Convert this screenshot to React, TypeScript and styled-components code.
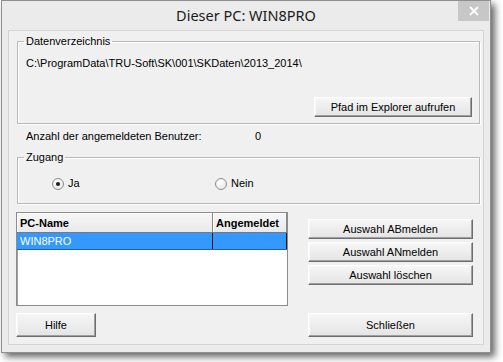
import React from "react";
import styled, { createGlobalStyle } from "styled-components";

const GlobalStyle = createGlobalStyle`
  html, body {
    margin: 0;
    padding: 0;
    background: #ffffff;
  }
  body {
    font-family: "Liberation Sans", Arial, sans-serif;
    font-size: 11px;
    color: #000;
  }
`;

const Page = styled.div`
  padding: 0 0 0 1px;
  width: 503px;
  height: 362px;
  box-sizing: border-box;
  overflow: hidden;
`;

const Window = styled.div`
  width: 490px;
  height: 353px;
  box-sizing: border-box;
  background: #ebebeb;
  border: 1px solid #8f8f8f;
  box-shadow: 4px 4px 7px rgba(0, 0, 0, 0.6);
  display: flex;
  flex-direction: column;
`;

const TitleBar = styled.div`
  height: 29px;
  display: grid;
  grid-template-columns: 33px 1fr 33px;
  align-items: start;
`;

const Title = styled.div`
  grid-column: 2;
  text-align: center;
  font-family: "Noto Sans", "Open Sans", sans-serif;
  font-size: 14.5px;
  line-height: 29px;
  color: #1a1a1a;
`;

const CloseButton = styled.div`
  grid-column: 3;
  justify-self: end;
  margin-right: 1px;
  width: 31px;
  height: 20px;
  background: #c7c7c7;
  display: flex;
  align-items: center;
  justify-content: center;
`;

const Client = styled.div`
  flex: 1;
  margin: 0 6px 7px 6px;
  background: #f0f0f0;
  border: 1px solid #d4d4d4;
  padding: 4px 3px 0 7px;
  display: flex;
  flex-direction: column;
`;

const GroupBox = styled.fieldset<{ $pb: number; $pt: number }>`
  margin: 0 0 0 1px;
  padding: ${(p) => p.$pt}px 7px ${(p) => p.$pb}px 8px;
  border: 1px solid #b9b9b9;
  box-shadow: inset 1px 1px 0 #ffffff, 1px 1px 0 #ffffff;
  min-width: 0;
`;

const Legend = styled.legend`
  padding: 0 2px;
  margin-left: -2px;
  line-height: 13px;
  font-size: 11px;
`;

const Line = styled.div`
  line-height: 13px;
  white-space: nowrap;
`;

const Button = styled.button<{ $w: number; $h: number }>`
  width: ${(p) => p.$w}px;
  height: ${(p) => p.$h}px;
  box-sizing: border-box;
  padding: 0;
  font-family: "Liberation Sans", Arial, sans-serif;
  font-size: 11px;
  color: #000;
  background: linear-gradient(#f6f6f6, #e4e4e4);
  border: 1px solid;
  border-color: #ffffff #6d6d6d #6d6d6d #ffffff;
  box-shadow: inset -1px -1px 0 #a0a0a0, inset 1px 1px 0 #f8f8f8;
`;

const ButtonRow = styled.div`
  display: flex;
  justify-content: flex-end;
  margin-top: 27px;
`;

const CountRow = styled.div`
  display: flex;
  line-height: 13px;
  margin: 6px 0 8px 0;
  padding-left: 10px;
`;

const CountLabel = styled.span`
  width: 229px;
`;

const RadioRow = styled.div`
  display: flex;
  padding-left: 26px;
`;

const RadioOption = styled.label`
  width: 163px;
  display: flex;
  align-items: center;
  gap: 4px;
  line-height: 13px;
`;

const RadioCircle = styled.span<{ $checked?: boolean }>`
  width: 12px;
  height: 12px;
  box-sizing: border-box;
  border-radius: 50%;
  border: 1px solid #8e8f8f;
  background: radial-gradient(circle at 40% 35%, #ffffff 0%, #e6e6e6 80%);
  display: flex;
  align-items: center;
  justify-content: center;
  &::after {
    content: "";
    width: 4px;
    height: 4px;
    border-radius: 50%;
    background: ${(p) => (p.$checked ? "#1a1a1a" : "transparent")};
  }
`;

const Lower = styled.div`
  display: flex;
  gap: 20px;
  margin-top: 8px;
`;

const ListView = styled.div`
  width: 272px;
  height: 94px;
  box-sizing: border-box;
  background: #ffffff;
  border: 1px solid #8c8c8c;
  box-shadow: inset 1px 1px 0 #a0a0a0;
`;

const ListRow = styled.div<{ $header?: boolean; $selected?: boolean }>`
  display: grid;
  grid-template-columns: 196px 1fr;
  height: ${(p) => (p.$header ? 19 : 16)}px;
  background: ${(p) =>
    p.$header ? "linear-gradient(#f7f7f7, #e9e9e9)" : p.$selected ? "#3399ff" : "transparent"};
  color: ${(p) => (p.$selected ? "#ffffff" : "#000")};
  font-weight: ${(p) => (p.$header ? "bold" : "normal")};
  border-bottom: 1px solid ${(p) => (p.$header ? "#7a7a7a" : p.$selected ? "#1a5fb0" : "transparent")};
`;

const Cell = styled.div<{ $header?: boolean }>`
  padding-left: 3px;
  display: flex;
  align-items: center;
  white-space: nowrap;
  overflow: hidden;
  border-right: 1px solid ${(p) => (p.$header ? "#8a8a8a" : "#1a1a1a")};
  box-shadow: ${(p) => (p.$header ? "inset 1px 1px 0 #ffffff" : "none")};
`;

const SideButtons = styled.div`
  display: flex;
  flex-direction: column;
  gap: 3px;
  padding-top: 7px;
`;

const BottomRow = styled.div`
  display: flex;
  justify-content: space-between;
  margin: 7px 0 0 0;
  width: 457px;
`;

export default function App() {
  return (
    <>
      <GlobalStyle />
      <Page>
        <Window>
          <TitleBar>
            <Title>Dieser PC: WIN8PRO</Title>
            <CloseButton>
              <svg width="10" height="10" viewBox="0 0 10 10">
                <path d="M1 1 L9 9 M9 1 L1 9" stroke="#ffffff" strokeWidth="1.8" />
              </svg>
            </CloseButton>
          </TitleBar>
          <Client>
            <GroupBox $pt={9} $pb={6}>
              <Legend>Datenverzeichnis</Legend>
              <Line>C:\ProgramData\TRU-Soft\SK\001\SKDaten\2013_2014\</Line>
              <ButtonRow>
                <Button $w={158} $h={20}>Pfad im Explorer aufrufen</Button>
              </ButtonRow>
            </GroupBox>
            <CountRow>
              <CountLabel>Anzahl der angemeldeten Benutzer:</CountLabel>
              <span>0</span>
            </CountRow>
            <GroupBox $pt={13} $pb={13}>
              <Legend>Zugang</Legend>
              <RadioRow>
                <RadioOption>
                  <RadioCircle $checked />
                  Ja
                </RadioOption>
                <RadioOption>
                  <RadioCircle />
                  Nein
                </RadioOption>
              </RadioRow>
            </GroupBox>
            <Lower>
              <ListView>
                <ListRow $header>
                  <Cell $header>PC-Name</Cell>
                  <Cell $header>Angemeldet</Cell>
                </ListRow>
                <ListRow $selected>
                  <Cell>WIN8PRO</Cell>
                  <Cell />
                </ListRow>
              </ListView>
              <SideButtons>
                <Button $w={165} $h={20}>Auswahl ABmelden</Button>
                <Button $w={165} $h={20}>Auswahl ANmelden</Button>
                <Button $w={165} $h={20}>Auswahl löschen</Button>
              </SideButtons>
            </Lower>
            <BottomRow>
              <Button $w={80} $h={24}>Hilfe</Button>
              <Button $w={165} $h={24}>Schließen</Button>
            </BottomRow>
          </Client>
        </Window>
      </Page>
    </>
  );
}
